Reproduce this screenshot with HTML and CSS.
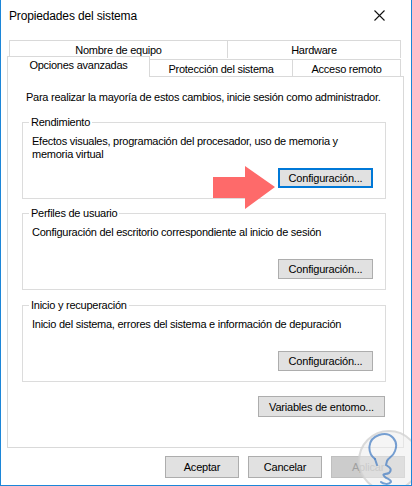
FILE: index.html
```html
<!DOCTYPE html>
<html lang="es">
<head>
<meta charset="utf-8">
<title>Propiedades del sistema</title>
<link rel="stylesheet" href="styles.css">
</head>
<body>
<div class="window">
  <div class="titlebar">
    <span class="title">Propiedades del sistema</span>
    <svg class="close" width="11" height="11" viewBox="0 0 11 11"><path d="M0.5 0.5 L10.5 10.5 M10.5 0.5 L0.5 10.5" stroke="#111" stroke-width="1.1" fill="none"/></svg>
  </div>
  <div class="tabs">
    <div class="tabrow back">
      <div class="tab t-nombre">Nombre de equipo</div>
      <div class="tab t-hard">Hardware</div>
    </div>
    <div class="tabrow front">
      <div class="tab selected t-opc">Opciones avanzadas</div>
      <div class="tab t-prot">Protección del sistema</div>
      <div class="tab t-acc">Acceso remoto</div>
    </div>
  </div>
  <div class="panel">
    <p class="intro">Para realizar la mayoría de estos cambios, inicie sesión como administrador.</p>
    <fieldset class="group g1">
      <legend>Rendimiento</legend>
      <p class="desc">Efectos visuales, programación del procesador, uso de memoria y<br>memoria virtual</p>
      <div class="btnrow"><button class="btn focused">Configuración...</button></div>
      <svg class="arrow" width="64" height="44" viewBox="0 0 64 44"><polygon points="0,11 32,11 32,0 62,21 32,43 32,32 0,32" fill="#fe6a6a"/></svg>
    </fieldset>
    <fieldset class="group g2">
      <legend>Perfiles de usuario</legend>
      <p class="desc">Configuración del escritorio correspondiente al inicio de sesión</p>
      <div class="btnrow tall"><button class="btn">Configuración...</button></div>
    </fieldset>
    <fieldset class="group g3">
      <legend>Inicio y recuperación</legend>
      <p class="desc">Inicio del sistema, errores del sistema e información de depuración</p>
      <div class="btnrow tall"><button class="btn">Configuración...</button></div>
    </fieldset>
    <div class="envrow"><button class="btn env">Variables de entomo...</button></div>
  </div>
  <div class="footer">
    <button class="btn foot">Aceptar</button>
    <button class="btn foot">Cancelar</button>
    <button class="btn foot disabled">Aplicar</button>
  </div>
  <svg class="watermark" width="64" height="60" viewBox="0 0 64 60">
    <circle cx="36" cy="32" r="30" fill="rgba(236,236,236,0.55)" stroke="rgba(210,210,210,0.8)" stroke-width="2"/>
    <path d="M22 30 C14 24 14 10 26 6 C38 2 46 12 42 22 C40 28 36 28 34 32 L33 36 C36 38 40 40 36 44 C32 46 28 44 32 48 C34 50 38 50 38 53 C36 56 30 55 28 53" fill="none" stroke="rgba(74,128,196,0.75)" stroke-width="2" stroke-linecap="round"/>
    <path d="M22 30 L24 36" fill="none" stroke="rgba(74,128,196,0.75)" stroke-width="2" stroke-linecap="round"/>
  </svg>
</div>
</body>
</html>
```
FILE: styles.css
```css
* { box-sizing: border-box; }
html, body { margin: 0; padding: 0; background: #fff; }
body {
  font-family: "Liberation Sans", Arial, sans-serif;
  font-size: 11px;
  letter-spacing: -0.25px;
  color: #000;
}
.window {
  position: relative;
  width: 412px;
  height: 486px;
  background: #fff;
  border: 1px solid #1c86d8;
  border-top: none;
  overflow: hidden;
}
.titlebar {
  height: 40px;
  display: flex;
  align-items: flex-start;
  justify-content: space-between;
  padding: 8px 26px 0 8px;
}
.title {
  font-size: 12px;
  letter-spacing: -0.15px;
  line-height: 16px;
  color: #000;
}
.close { margin-top: 2px; }

.tabs { padding: 0 0 0 6px; }
.tabrow { display: flex; }
.tabrow.back { padding-left: 2px; height: 17px; }
.tabrow.front { align-items: flex-end; height: 20px; margin-top: -1px; position: relative; z-index: 1; }
.tab {
  border: 1px solid #d9d9d9;
  border-bottom: none;
  text-align: center;
  background: #fff;
  white-space: nowrap;
}
.back .tab { height: 18px; line-height: 17px; padding-top: 1px; }
.t-nombre { width: 219px; }
.t-hard { width: 174px; margin-left: -1px; }
.front .tab { height: 17px; line-height: 16px; padding-top: 1px; }
.front .tab.selected {
  height: 21px;
  margin-bottom: -1px;
  line-height: 15px;
  padding-top: 1px;
  position: relative;
  z-index: 2;
}
.t-opc { width: 143px; }
.t-prot { width: 144px; margin-left: -1px; }
.t-acc { width: 109px; margin-left: -1px; }

.panel {
  margin-left: 6px;
  width: 397px;
  height: 372px;
  border: 1px solid #d9d9d9;
  padding: 13px 17px 0 14px;
}
.intro {
  margin: 0 0 11px 4px;
  line-height: 15px;
  white-space: nowrap;
}
.group {
  position: relative;
  margin: 0;
  width: 364px;
  border: 1px solid #dcdcdc;
  padding: 6px 12px 10px 9px;
}
.group legend {
  padding: 0 2px;
  margin-left: -3px;
  line-height: 13px;
}
.g2 { margin-top: 8px; }
.g3 { margin-top: 9px; }
.desc {
  margin: 0;
  line-height: 13px;
  white-space: nowrap;
}
.btnrow { display: flex; justify-content: flex-end; margin-top: 7px; }
.btnrow.tall { margin-top: 20px; }
.btn {
  font-family: inherit;
  font-size: 11px;
  letter-spacing: -0.2px;
  color: #000;
  background: #e1e1e1;
  border: 1px solid #adadad;
  height: 20px;
  padding: 0;
  margin: 0;
  border-radius: 0;
}
.group .btn { width: 95px; }
.btn.focused { border: 2px solid #0078d7; }
.arrow { position: absolute; left: 190px; top: 37px; }
.envrow { display: flex; justify-content: flex-end; margin-top: 14px; padding-right: 1px; }
.btn.env { width: 127px; height: 21px; }

.footer {
  display: flex;
  justify-content: flex-end;
  gap: 9px;
  padding: 8px 6px 0 0;
}
.btn.foot { width: 74px; height: 22px; }
.btn.disabled { color: #a0a0a0; background: #cccccc; border-color: #bfbfbf; }
.watermark { position: absolute; right: -6px; bottom: -4px; pointer-events: none; }
```
